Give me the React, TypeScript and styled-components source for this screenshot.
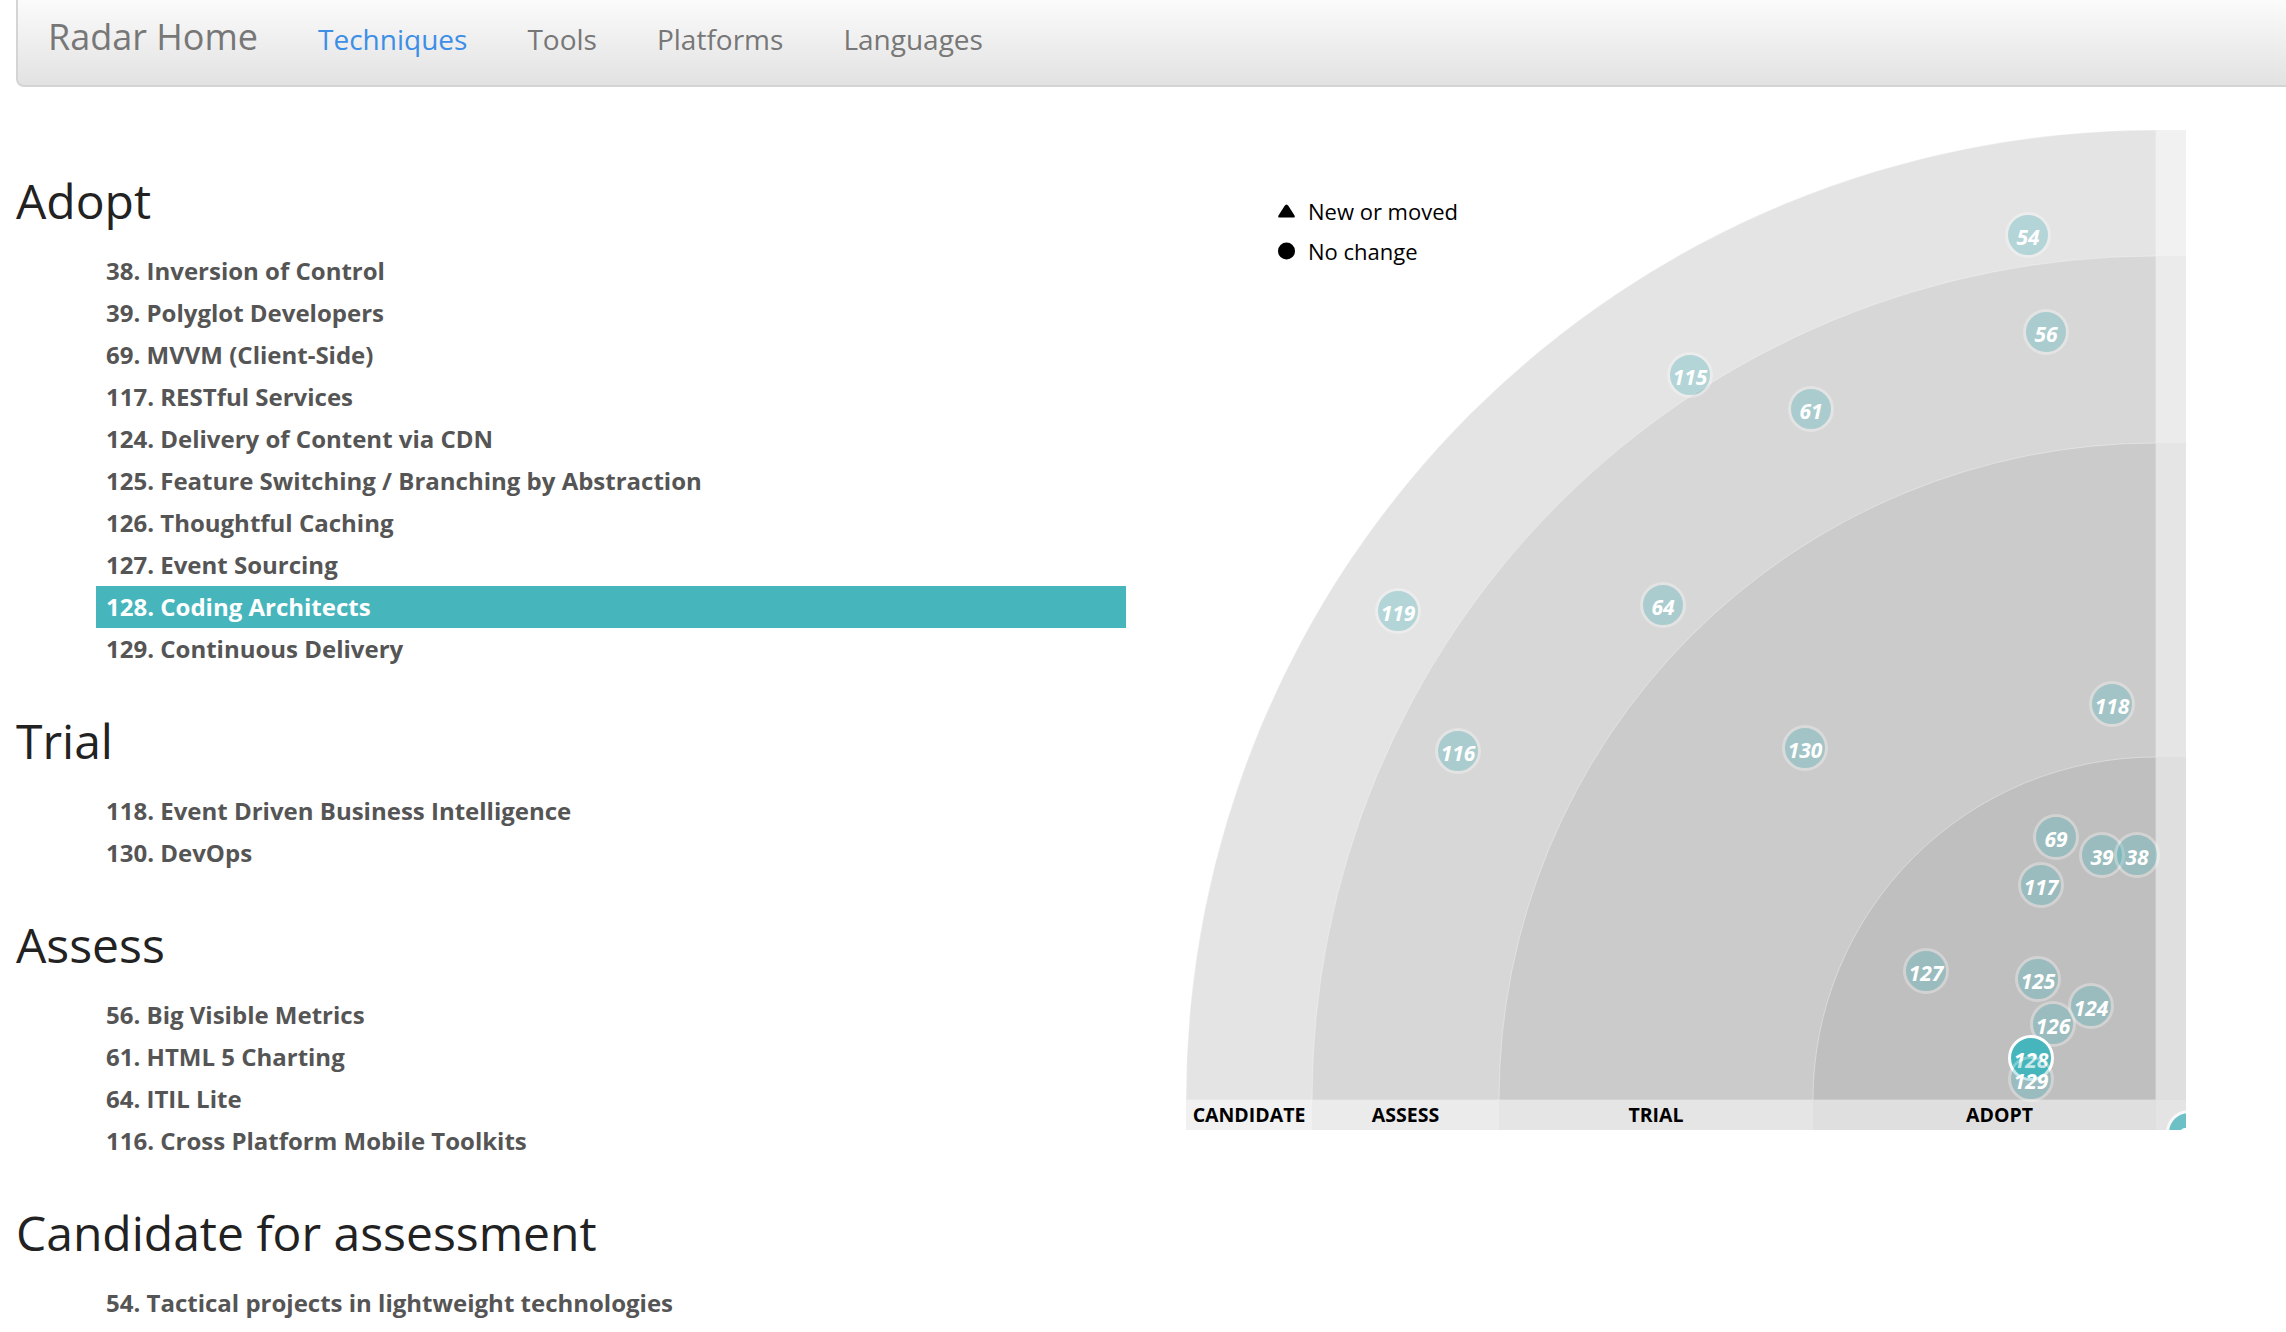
import React from "react";
import styled, { createGlobalStyle } from "styled-components";

const GlobalStyle = createGlobalStyle`
  html, body { margin: 0; padding: 0; background: #ffffff; }
  body {
    font-family: "Open Sans", "Liberation Sans", sans-serif;
    overflow: hidden;
  }
`;

const Page = styled.div`
  width: 2286px;
  height: 1332px;
  overflow: hidden;
`;

const NavBar = styled.nav`
  margin-left: 16px;
  display: flex;
  align-items: baseline;
  padding: 19px 0 0 30px;
  box-sizing: border-box;
  height: 87px;
  background: linear-gradient(#fbfbfb, #e2e2e2);
  border-left: 2px solid #d4d4d4;
  border-bottom: 2px solid #d4d4d4;
  border-bottom-left-radius: 8px;
`;

const Brand = styled.a`
  font-size: 36px;
  line-height: 36px;
  color: #777777;
  margin-right: 30px;
  text-decoration: none;
`;

const NavLink = styled.a<{ $active?: boolean }>`
  font-size: 28px;
  line-height: 28px;
  padding: 0 30px;
  color: ${(p) => (p.$active ? "#3d8ee6" : "#777777")};
  text-decoration: none;
`;

const Main = styled.main`
  display: flex;
  align-items: flex-start;
`;

const ListColumn = styled.section`
  width: 1110px;
  margin-left: 16px;
  padding-top: 85px;
`;

const Section = styled.div`
  & + & {
    margin-top: 42px;
  }
`;

const SectionTitle = styled.h2`
  margin: 0 0 20px;
  font-size: 48px;
  line-height: 58px;
  font-weight: 400;
  color: #222222;
`;

const ItemList = styled.ul`
  list-style: none;
  margin: 0 0 0 80px;
  padding: 0;
`;

const Item = styled.li<{ $active?: boolean }>`
  height: 42px;
  line-height: 42px;
  padding-left: 10px;
  font-size: 24px;
  font-weight: 700;
  color: ${(p) => (p.$active ? "#ffffff" : "#555555")};
  background: ${(p) => (p.$active ? "#46b6bc" : "transparent")};
`;

const ChartArea = styled.div`
  position: relative;
  margin-left: 60px;
  margin-top: 43px;
  width: 1000px;
  height: 1000px;
`;

const Legend = styled.div`
  position: absolute;
  left: 91px;
  top: 61px;
  display: flex;
  flex-direction: column;
`;

const LegendRow = styled.div`
  display: flex;
  align-items: center;
  gap: 12px;
  height: 40px;
  font-size: 22px;
  color: #000000;
`;

const ChartSvg = styled.svg`
  display: block;
  overflow: hidden;
`;

type SectionData = { title: string; items: string[] };

const sections: SectionData[] = [
  {
    title: "Adopt",
    items: [
      "38. Inversion of Control",
      "39. Polyglot Developers",
      "69. MVVM (Client-Side)",
      "117. RESTful Services",
      "124. Delivery of Content via CDN",
      "125. Feature Switching / Branching by Abstraction",
      "126. Thoughtful Caching",
      "127. Event Sourcing",
      "128. Coding Architects",
      "129. Continuous Delivery",
    ],
  },
  {
    title: "Trial",
    items: ["118. Event Driven Business Intelligence", "130. DevOps"],
  },
  {
    title: "Assess",
    items: [
      "56. Big Visible Metrics",
      "61. HTML 5 Charting",
      "64. ITIL Lite",
      "116. Cross Platform Mobile Toolkits",
    ],
  },
  {
    title: "Candidate for assessment",
    items: ["54. Tactical projects in lightweight technologies"],
  },
];

const CX = 970;
const CY = 970;
const rings = [
  { r: 970, color: "#e4e4e4", strip: "#f1f1f1", label: "CANDIDATE" },
  { r: 844, color: "#d7d7d7", strip: "#ebebeb", label: "ASSESS" },
  { r: 657, color: "#cbcbcb", strip: "#e5e5e5", label: "TRIAL" },
  { r: 343, color: "#bfbfbf", strip: "#dfdfdf", label: "ADOPT" },
];

const blips: { n: string; x: number; y: number; active?: boolean }[] = [
  { n: "54", x: 842, y: 105 },
  { n: "56", x: 860, y: 202 },
  { n: "115", x: 504, y: 245 },
  { n: "61", x: 625, y: 279 },
  { n: "119", x: 212, y: 481 },
  { n: "64", x: 477, y: 475 },
  { n: "118", x: 926, y: 574 },
  { n: "116", x: 272, y: 621 },
  { n: "130", x: 619, y: 618 },
  { n: "69", x: 870, y: 707 },
  { n: "39", x: 916, y: 725 },
  { n: "38", x: 951, y: 725 },
  { n: "117", x: 855, y: 755 },
  { n: "127", x: 740, y: 841 },
  { n: "125", x: 852, y: 849 },
  { n: "124", x: 905, y: 876 },
  { n: "126", x: 867, y: 894 },
  { n: "128", x: 845, y: 928, active: true },
  { n: "129", x: 845, y: 949 },
];

const sector = (r: number) =>
  `M ${CX} ${CY} L ${CX - r} ${CY} A ${r} ${r} 0 0 1 ${CX} ${CY - r} Z`;

const FONT = "'Open Sans', 'Liberation Sans', sans-serif";

const Radar: React.FC = () => (
  <ChartSvg width={1000} height={1000} viewBox="0 0 1000 1000">
    {rings.map((ring) => (
      <path
        key={ring.label}
        d={sector(ring.r)}
        fill={ring.color}
        stroke="rgba(255,255,255,0.35)"
        strokeWidth={1}
      />
    ))}
    {rings.map((ring, i) => {
      const inner = i + 1 < rings.length ? rings[i + 1].r : 0;
      return (
        <g key={`strip-${ring.label}`}>
          <rect x={CX} y={CY - ring.r} width={30} height={ring.r - inner} fill={ring.strip} />
          <rect x={CX - ring.r} y={CY} width={ring.r - inner} height={30} fill={ring.strip} />
        </g>
      );
    })}
    <rect x={CX} y={CY} width={30} height={30} fill="#e4e4e4" />
    {rings.map((ring, i) => {
      const inner = i + 1 < rings.length ? rings[i + 1].r : -30;
      const cx = CX - (ring.r + inner) / 2;
      return (
        <text
          key={`lbl-${ring.label}`}
          x={cx}
          y={CY + 22}
          textAnchor="middle"
          fontFamily={FONT}
          fontWeight={700}
          fontSize={19.5}
          fill="#000"
        >
          {ring.label}
        </text>
      );
    })}
    {blips.map((b) => (
      <g key={b.n}>
        <circle
          cx={b.x}
          cy={b.y}
          r={21.5}
          fill="#46b6bc"
          stroke="#ffffff"
          strokeWidth={3}
          opacity={b.active ? 1 : 0.3}
        />
        <text
          x={b.x}
          y={b.y + 10}
          textAnchor="middle"
          fontFamily={FONT}
          fontWeight={700}
          fontStyle="italic"
          fontSize={21}
          fill="#ffffff"
        >
          {b.n}
        </text>
      </g>
    ))}
    <g>
      <circle cx={1003} cy={1003} r={21.5} fill="#46b6bc" stroke="#ffffff" strokeWidth={3} opacity={0.75} />
      <text
        x={996}
        y={1013}
        textAnchor="middle"
        fontFamily={FONT}
        fontWeight={700}
        fontStyle="italic"
        fontSize={21}
        fill="#ffffff"
      >
        1
      </text>
    </g>
  </ChartSvg>
);

const TriangleIcon = () => (
  <svg width="19" height="16" viewBox="0 0 19 16">
    <path
      d="M9.5 1.5 Q10.5 1.5 11.5 3 L17.5 12.5 Q18.5 14.5 16.5 14.5 L2.5 14.5 Q0.5 14.5 1.5 12.5 L7.5 3 Q8.5 1.5 9.5 1.5 Z"
      fill="#000"
    />
  </svg>
);

const DotIcon = () => (
  <svg width="19" height="18" viewBox="0 0 19 18">
    <circle cx="9.5" cy="9" r="8.5" fill="#000" />
  </svg>
);

export default function App() {
  return (
    <Page>
      <GlobalStyle />
      <NavBar>
        <Brand href="#">Radar Home</Brand>
        <NavLink href="#" $active>
          Techniques
        </NavLink>
        <NavLink href="#">Tools</NavLink>
        <NavLink href="#">Platforms</NavLink>
        <NavLink href="#">Languages</NavLink>
      </NavBar>
      <Main>
        <ListColumn>
          {sections.map((s) => (
            <Section key={s.title}>
              <SectionTitle>{s.title}</SectionTitle>
              <ItemList>
                {s.items.map((it) => (
                  <Item key={it} $active={it.startsWith("128.")}>
                    {it}
                  </Item>
                ))}
              </ItemList>
            </Section>
          ))}
        </ListColumn>
        <ChartArea>
          <Radar />
          <Legend>
            <LegendRow>
              <TriangleIcon />
              New or moved
            </LegendRow>
            <LegendRow>
              <DotIcon />
              No change
            </LegendRow>
          </Legend>
        </ChartArea>
      </Main>
    </Page>
  );
}
